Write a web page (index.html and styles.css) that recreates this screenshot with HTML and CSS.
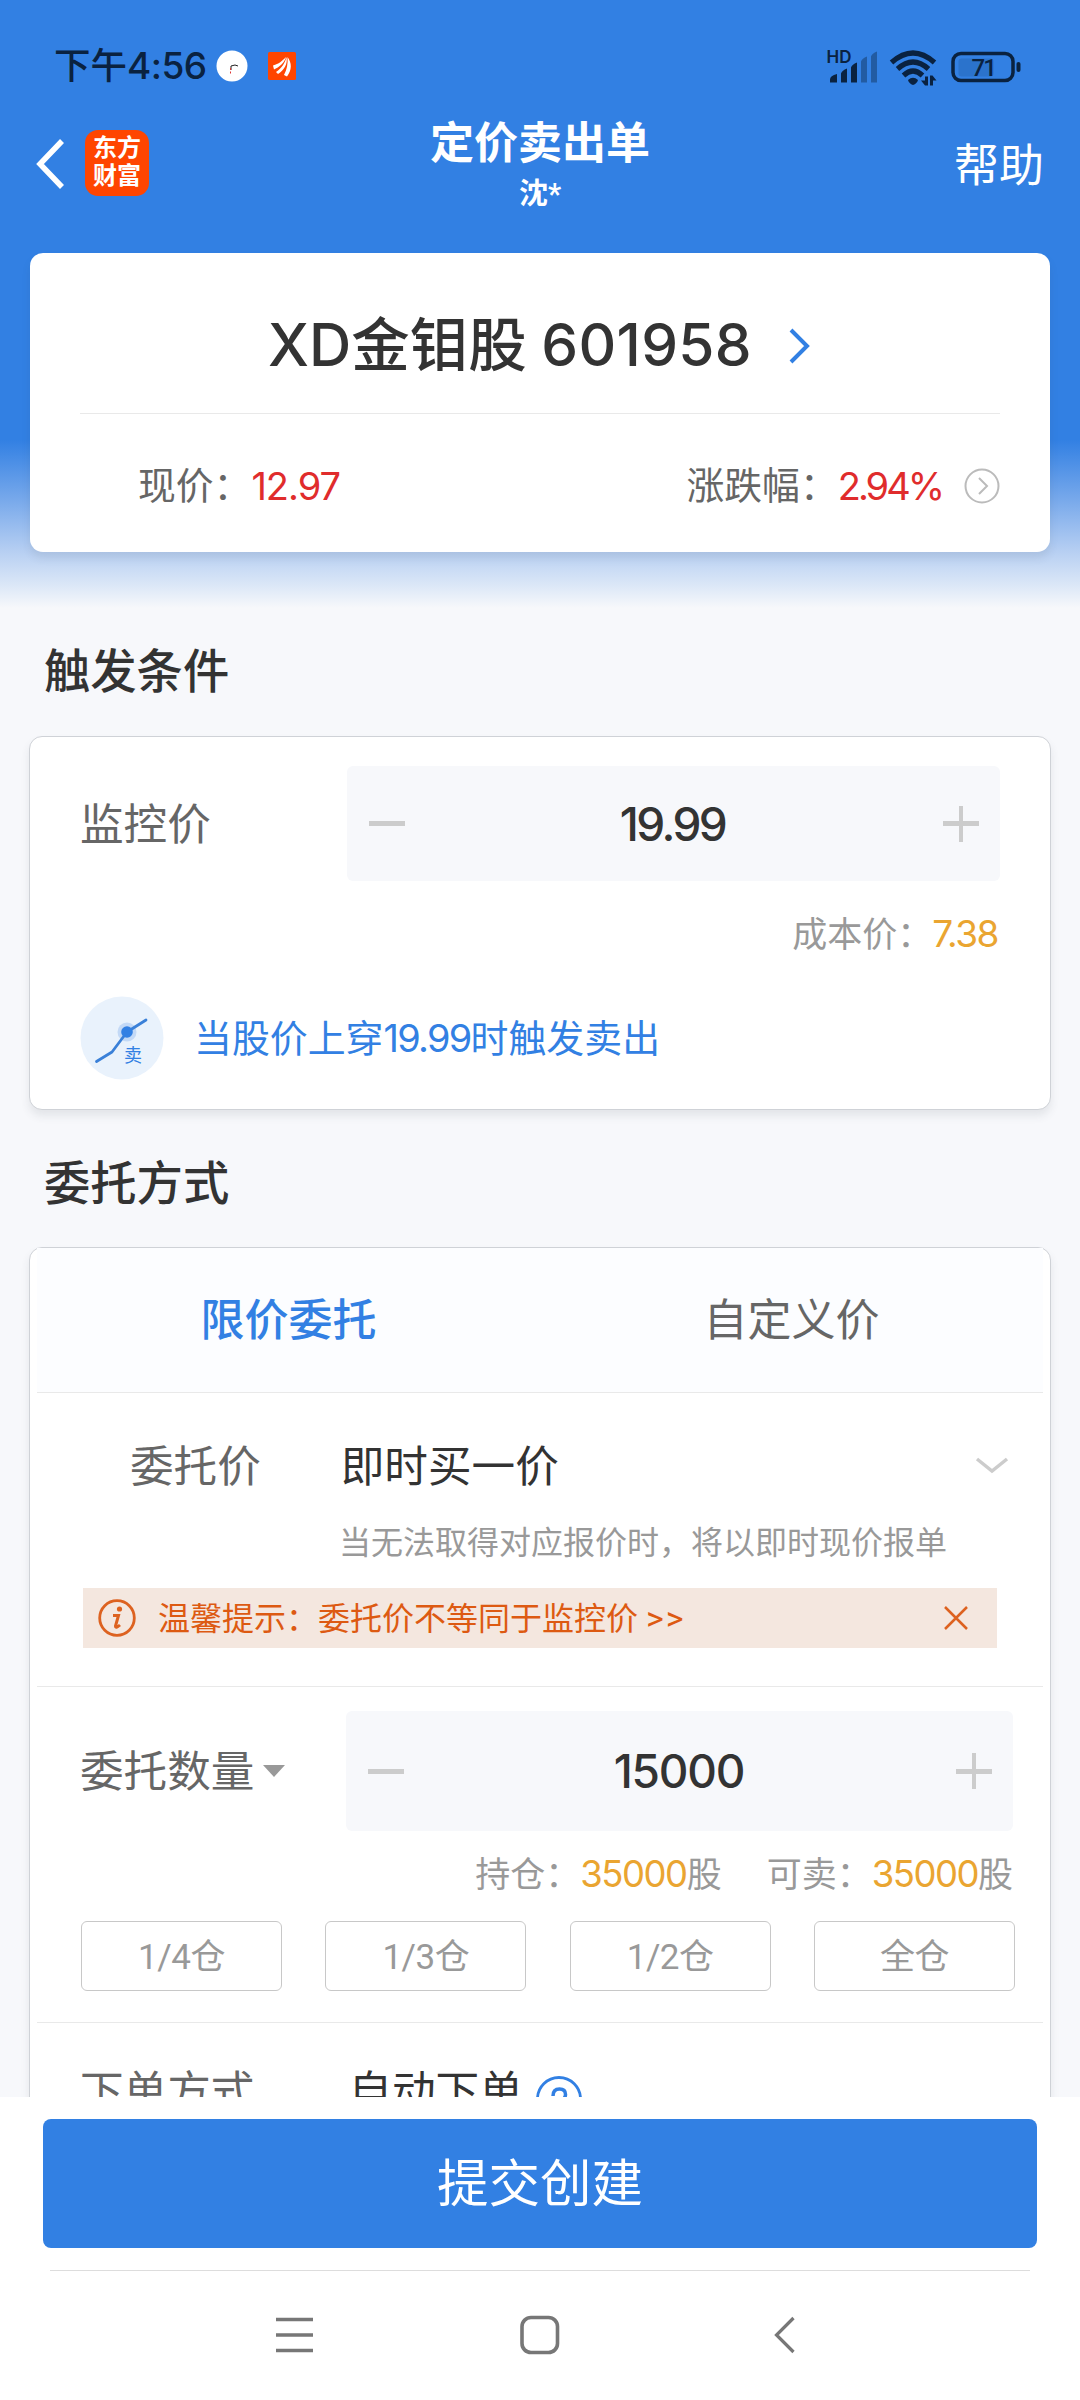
FILE: index.html
```html
<!DOCTYPE html>
<html lang="zh-CN">
<head>
<meta charset="utf-8">
<title>定价卖出单</title>
<link rel="stylesheet" href="styles.css">
</head>
<body>
<div class="screen">
  <main class="content">
    <div class="statusbar">
      <span class="clock">下午<span class="clock-digits">4:56</span></span>
      <svg class="status-apps" width="80" height="32" viewBox="0 0 80 32">
        <circle cx="16" cy="16" r="15.5" fill="#fff"/>
        <path d="M15 20v-4l4-1 3 1" fill="none" stroke="#222" stroke-width="1"/>
        <path d="M14.500 18v6" stroke="#d33" stroke-width="1" stroke-dasharray="2 1.500"/>
        <rect x="52" y="2" width="28" height="28" rx="1.500" fill="#ff4500"/>
        <path d="M57 15.500C63 14 66 11 70 7 69 12 63 17.500 58 19.500ZM60 22C66 18 69 13 70.500 7 72 14 68 20 62 24ZM68 25C71 19 72 14 71.500 7 76 13 76 20 71 26.500Z" fill="#fff"/>
      </svg>
      <span class="grow"></span>
      <svg width="200" height="44" viewBox="0 0 200 44">
        <text class="hd" x="1.500" y="19">HD</text>
        <g fill="#0a2240">
          <path d="M5 38.500v-3q0-4 7-5.500v8.500ZM16 38.500v-9q1-3 6-5v14h-6ZM26 38.500v-15q1-3 6-5v20h-6Z"/>
          <path d="M36 38.500v-21q1-3 6-5v26h-6ZM46 38.500v-26q1-3 6-5v31h-6Z" opacity=".4"/>
          <path d="M83 36q5-4.500 10 0-1 3.500-5 5-4-1.500-5-5Z"/>
          <path d="M100 32.500h3v9h-3l-4-5h4ZM105 41.500v-10h2.500l4 5H108v5Z"/>
        </g>
        <g fill="none" stroke="#0a2240" stroke-width="5.200">
          <path d="M66.500 18.500q21.500-19 43 0M72.500 25q15.500-14 31 0M78.500 31.500q9.500-9 19 0"/>
        </g>
        <rect x="128" y="9.500" width="60" height="27" rx="8" fill="none" stroke="#0a2240" stroke-width="3.500"/>
        <rect x="133.500" y="14.500" width="35" height="18" rx="3" fill="#0a2240" opacity=".14"/>
        <rect x="191.500" y="18" width="4" height="10" rx="2" fill="#0a2240"/>
        <text class="battery" x="146.500" y="31.500">71</text>
      </svg>
    </div>

    <header class="navbar">
      <div class="nav-left">
        <svg width="30" height="52" viewBox="0 0 30 52"><path d="M26 3 4 26l22 23" fill="none" stroke="#fff" stroke-width="5.500"/></svg>
        <div class="brand"><span>东方</span><span>财富</span></div>
      </div>
      <div class="nav-title">
        <h1>定价卖出单</h1>
        <span class="account">沈*</span>
      </div>
      <span class="help">帮助</span>
    </header>

    <section class="card quote">
      <div class="stock">
        <span><span class="code">XD</span>金钼股 <span class="code digits">601958</span></span>
        <svg width="24" height="40" viewBox="0 0 24 40"><path d="M3 4 19 20 3 36" fill="none" stroke="#3280e3" stroke-width="4"/></svg>
      </div>
      <div class="prices">
        <span class="price-label">现价：</span><span class="up last">12.97</span>
        <span class="grow"></span>
        <span class="price-label">涨跌幅：</span><span class="up change">2.94%</span>
        <svg width="36" height="36" viewBox="0 0 36 36" fill="none" stroke="#bbb" stroke-width="2"><circle cx="18" cy="18" r="16.500"/><path d="m15 10 8 8-8 8"/></svg>
      </div>
    </section>

    <h2>触发条件</h2>
    <section class="card trigger">
      <div class="row monitor">
        <span class="label">监控价</span>
        <div class="stepper">
          <i class="minus"></i><b class="v1">19.99</b><i class="plus"></i>
        </div>
      </div>
      <div class="cost">成本价：<span class="gold">7.38</span></div>
      <div class="rule">
        <svg width="84" height="84" viewBox="0 0 84 84">
          <circle cx="42" cy="42" r="41.500" fill="#e9f2fc"/>
          <circle cx="47" cy="36" r="9.500" fill="#c3d9f6"/>
          <path d="M16.500 65.500 32 56 47 36l19-12" fill="none" stroke="#3a80d8" stroke-width="2.800" stroke-linecap="round" stroke-linejoin="round"/>
          <circle cx="47" cy="36" r="5.800" fill="#3280e3"/>
          <text class="sell" x="44" y="66">卖</text>
        </svg>
        <span class="rule-text">当股价上穿<span class="rule-num">19.99</span>时触发卖出</span>
      </div>
    </section>

    <h2 class="second">委托方式</h2>
    <section class="card order">
      <div class="tabs"><span class="tab active">限价委托</span><span class="tab">自定义价</span></div>
      <div class="order-price">
        <div class="row select">
          <span class="label">委托价</span><span class="value">即时买一价</span>
          <svg width="36" height="20" viewBox="0 0 36 20"><path d="m3 3 15 12L33 3" fill="none" stroke="#ccc" stroke-width="3.500"/></svg>
        </div>
        <p class="hint">当无法取得对应报价时，将以即时现价报单</p>
        <div class="tip">
          <svg width="40" height="40" viewBox="0 0 40 40"><circle cx="20" cy="20" r="17.300" fill="none" stroke="#dd6220" stroke-width="2.800"/><circle cx="22.500" cy="11" r="2.600" fill="#dd6220"/><path d="M16 17.500h5.500L18.500 28q0 3 4.500-1" fill="none" stroke="#dd6220" stroke-width="3"/></svg>
          <span class="tip-text">温馨提示：委托价不等同于监控价 <span class="more">&gt;&gt;</span></span>
          <svg width="26" height="26" viewBox="0 0 26 26"><path d="m2 2 22 22M24 2 2 24" stroke="#dd6220" stroke-width="2.500"/></svg>
        </div>
      </div>
      <div class="quantity">
        <div class="row">
          <span class="label">委托数量</span>
          <svg class="caret" width="22" height="12" viewBox="0 0 22 12"><path d="M0 0h22L11 12Z" fill="#999"/></svg>
          <div class="stepper wide">
            <i class="minus"></i><b class="v2">15000</b><i class="plus"></i>
          </div>
        </div>
        <div class="holdings">
          <span>持仓：<span class="gold">35000</span>股</span>
          <span>可卖：<span class="gold">35000</span>股</span>
        </div>
        <div class="portions"><span>1/4仓</span><span>1/3仓</span><span>1/2仓</span><span>全仓</span></div>
      </div>
      <div class="row placing">
        <span class="label">下单方式</span><span class="value">自动下单</span>
        <svg width="48" height="48" viewBox="0 0 48 48"><circle cx="24" cy="24" r="21.500" fill="none" stroke="#3280e3" stroke-width="2.800"/><path d="M18 21q0-7 6.500-7 6 0 6 5.500 0 3.500-4 6-2.500 1.500-2.500 4.500" fill="none" stroke="#3280e3" stroke-width="3.500"/><circle cx="24" cy="34.500" r="2" fill="#3280e3"/></svg>
      </div>
    </section>
  </main>

  <footer class="footer">
    <div class="submit">提交创建</div>
    <div class="sysnav">
      <svg width="1080" height="60" viewBox="0 0 1080 60" fill="none" stroke="#777" stroke-width="3.600">
        <path d="M276 14.500h37M276 30h37M276 45.500h37"/>
        <rect x="522" y="12.500" width="35.500" height="35" rx="9"/>
        <path d="M793.500 13 776.500 30l17 17" stroke-width="3.200"/>
      </svg>
    </div>
  </footer>
</div>
</body>
</html>
```
FILE: styles.css
```css
* { box-sizing: border-box; }

body {
  margin: 0;
  font-family: Roboto, "Noto Sans CJK SC", sans-serif;
  color: #333;
}

.screen {
  width: 1080px;
  height: 2400px;
  display: flex;
  flex-direction: column;
  overflow: hidden;
  background: #f7f8fb;
}

.content {
  height: 2097px;
  overflow: hidden;
  background: linear-gradient(#3280e3 0, #3280e3 440px, #78a9eb 500px, #b5cef2 550px, #dbe7f7 585px, #f7f8fb 608px);
}

.grow { flex: 1; }

/* Numerals use a rounder face than the surrounding text. */
.clock-digits, .code, .up, .stepper b, .gold, .rule-num { font-family: Inter, sans-serif; }

.statusbar {
  display: flex;
  align-items: center;
  height: 132px;
  padding: 0 55px 0 54px;
  color: #0a2240;
}
.clock { font-size: 36.500px; line-height: 50px; font-weight: 500; width: 162px; white-space: nowrap; }
.clock-digits { font-size: 37px; letter-spacing: -0.500px; }
.hd { font: 600 17px Inter, sans-serif; fill: #0a2240; }
.battery { font: 500 24px Roboto, sans-serif; fill: #0a2240; letter-spacing: -2px; }

.navbar {
  display: grid;
  grid-template-columns: 1fr auto 1fr;
  height: 121px;
  padding: 0 36px 0 36px;
  color: #fff;
}
.nav-left { display: flex; align-items: center; height: 64px; gap: 19px; }
.brand {
  width: 64px;
  height: 66px;
  margin-top: -2px;
  padding-top: 4px;
  border-radius: 13px;
  background: #ff4500;
  font-size: 24px;
  font-weight: 700;
  line-height: 28px;
  text-align: center;
}
.brand span { display: block; }
.nav-title { text-align: center; margin-top: -18px; }
h1 { margin: 0; font-size: 44px; line-height: 60px; font-weight: 700; }
.account { display: block; font-size: 29px; line-height: 40px; font-weight: 700; }
.help { justify-self: end; font-size: 45px; line-height: 69px; }

.card {
  width: 1022px;
  margin: 0 auto;
  background: #fff;
  border: 1px solid #cfd2d7;
  border-radius: 13px;
  box-shadow: 0 6px 8px rgba(60, 65, 80, 0.1);
}

.quote { height: 299px; width: 1020px; padding: 0 49px; border-color: transparent; }
.stock {
  display: flex;
  align-items: center;
  justify-content: center;
  gap: 36px;
  height: 160px;
  padding-top: 24px;
  border-bottom: 1px solid #e9e9e9;
  font-size: 58.500px;
  font-weight: 500;
  line-height: 80px;
}
.digits { letter-spacing: 0.300px; }
.prices { display: flex; align-items: center; height: 137px; padding: 7px 0 0 58px; }
.price-label { font-size: 37.800px; line-height: 54px; color: #666; }
.up { color: #e02c2c; font-size: 38px; letter-spacing: -1px; }
.change { margin-right: 22px; letter-spacing: -3px; }

h2 { margin: 0; padding: 92px 0 0 44px; height: 184px; font-size: 46.300px; line-height: 56px; font-weight: 500; }
h2.second { height: 137px; padding-top: 46px; }

.label { font-size: 43.600px; line-height: 60px; padding-top: 4px; color: #666; white-space: nowrap; }
.value { font-size: 43.600px; line-height: 60px; padding-top: 4px; color: #333; }
.row { display: flex; align-items: center; }
.gold { color: #eaa531; }

.trigger { height: 374px; padding: 29px 50px 0 50px; }
.monitor { justify-content: space-between; }
.stepper {
  display: flex;
  align-items: center;
  justify-content: space-between;
  width: 653px;
  height: 115px;
  padding: 0 21px 0 22px;
  border-radius: 6px;
  background: #f7f8fb;
}
.stepper b { font-size: 46px; font-weight: 500; letter-spacing: -2.600px; }
.stepper .v1 { margin-right: 3px; }
.stepper .v2 { letter-spacing: -1.200px; margin-right: 2px; }
.minus, .plus { width: 36px; height: 36px; background: linear-gradient(#ccc, #ccc) center / 36px 5px no-repeat; }
.plus { background: linear-gradient(#ccc, #ccc) center / 36px 5px no-repeat, linear-gradient(#ccc, #ccc) center / 4px 36px no-repeat; }
.cost { margin: 28px 2px 0 0; text-align: right; font-size: 35px; line-height: 50px; color: #999; }
.cost .gold { font-size: 37px; letter-spacing: -1.500px; }
.rule { display: flex; align-items: center; gap: 30px; margin-top: 35px; font-size: 37.900px; color: #3280e3; }
.rule-text { padding-bottom: 5px; }
.rule-num { letter-spacing: -1.700px; }
.sell { font: 18px "Noto Sans CJK SC", sans-serif; fill: #3280e3; }

.order { height: 900px; padding: 0 7px; }
.tabs { display: flex; height: 145px; background: #fcfdff; border-bottom: 1px solid #e9e9e9; }
.tab { flex: 1; text-align: center; font-size: 44px; line-height: 147px; color: #666; }
.tab.active { color: #3280e3; font-weight: 500; }

.order-price { height: 294px; padding: 38px 46px 0; border-bottom: 1px solid #e9e9e9; }
.select { height: 70px; padding-left: 47px; }
.select .value { margin-left: 80px; flex: 1; }
.select svg { margin-right: -13px; }
.hint { margin: 17px 0 0 256px; font-size: 32px; line-height: 50px; color: #999; white-space: nowrap; }
.tip {
  display: flex;
  align-items: center;
  height: 60px;
  margin-top: 20px;
  padding: 0 28px 0 14px;
  background: #f4e7df;
  color: #dd5a12;
  font-size: 32px;
}
.tip-text { flex: 1; margin-left: 21px; padding-bottom: 4px; }
.more { font-size: 34px; letter-spacing: 2px; }

.quantity { height: 336px; padding: 24px 22px 0 43px; border-bottom: 1px solid #e9e9e9; }
.caret { flex: none; margin-left: 9px; margin-right: auto; }
.stepper.wide { width: 667px; height: 120px; margin-right: 8px; }
.holdings { display: flex; justify-content: flex-end; gap: 45px; margin: 18px 8px 0 0; font-size: 35px; line-height: 50px; color: #999; }
.holdings .gold { font-size: 36.500px; letter-spacing: -1.500px; }
.portions { display: grid; grid-template-columns: repeat(4, 201px); justify-content: space-between; margin: 20px 6px 0 1px; }
.portions span { height: 70px; border: 1px solid #c8c8c8; border-radius: 6px; text-align: center; font-size: 35px; line-height: 71px; letter-spacing: -0.500px; color: #999; }

.placing { height: 141px; padding: 0 43px; }
.placing .label, .placing .value { padding: 0 0 2px; }
.placing .value { margin-left: 94px; margin-right: 12px; }
.placing svg { margin-top: 10px; }

.footer { display: flex; flex-direction: column; align-items: center; height: 303px; padding-top: 22px; background: #fff; }
.submit { width: 994px; height: 129px; border-radius: 8px; background: #3280e3; color: #fff; text-align: center; font-size: 51.500px; line-height: 132px; }
.sysnav { display: flex; justify-content: center; width: 980px; margin-top: 22px; padding-top: 34px; border-top: 1px solid #ddd; }
.sysnav svg { flex: none; }
```
